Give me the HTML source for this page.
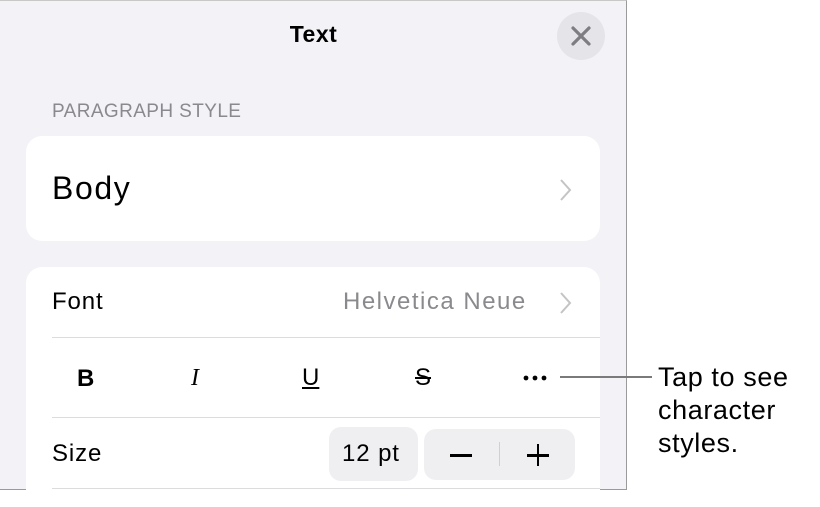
<!DOCTYPE html>
<html><head><style>
*{margin:0;padding:0;box-sizing:border-box}
body{width:820px;height:491px;background:#fff;position:relative;overflow:hidden;font-family:"Liberation Sans",sans-serif;color:#000}
.panel{position:absolute;left:0;top:0;width:627px;height:490px;background:#f2f2f7;border-right:1.5px solid #9a9a9a;border-bottom:1.5px solid #9a9a9a;border-top:1px solid #c8c8c8}
.abs{position:absolute}
.card{position:absolute;left:26px;width:574px;background:#fff;border-radius:16px}
.hr{position:absolute;left:52px;width:548px;height:1px;background:#dcdcdf}
.t{position:absolute;white-space:nowrap}
.lb{font-size:24px;letter-spacing:0.9px}
</style></head><body>
<div class="panel">
 <div class="t" style="left:0;width:627px;text-align:center;top:20px;font-size:23px;font-weight:bold;letter-spacing:0.5px">Text</div>
 <div class="abs" style="left:557px;top:11px;width:48px;height:48px;border-radius:50%;background:#e4e4e9"></div>
 <svg class="abs" style="left:569px;top:23px" width="24" height="24"><path d="M4 4L20 20M20 4L4 20" stroke="#7d7d82" stroke-width="3.2" stroke-linecap="round"/></svg>
 <div class="t" style="left:52px;top:100px;font-size:19px;color:#8a8a8e;letter-spacing:0.4px">PARAGRAPH STYLE</div>
 <div class="card" style="top:135px;height:105px"></div>
 <div class="t" style="left:52px;top:169px;font-size:32px;letter-spacing:1.6px">Body</div>
 <svg class="abs" style="left:559px;top:177px" width="14" height="24"><path d="M2 2L11 12L2 22" stroke="#c4c4c7" stroke-width="2" fill="none"/></svg>
 <div class="card" style="top:266px;height:240px;border-radius:16px 16px 0 0"></div>
 <div class="t lb" style="left:52px;top:287px">Font</div>
 <div class="t lb" style="left:343px;top:287px;color:#8a8a8e;letter-spacing:1.5px">Helvetica Neue</div>
 <svg class="abs" style="left:559px;top:290px" width="14" height="24"><path d="M2 2L11 12L2 22" stroke="#c4c4c7" stroke-width="2" fill="none"/></svg>
 <div class="hr" style="top:336px"></div>
 <div class="t" style="left:77px;top:364px;font-size:24px;font-weight:bold">B</div>
 <div class="t" style="left:191px;top:364px;font-size:24px;font-style:italic;font-family:'Liberation Serif',serif">I</div>
 <div class="t" style="left:302px;top:363px;font-size:24px;text-decoration:underline">U</div>
 <div class="t" style="left:415px;top:363px;font-size:24px;text-decoration:line-through">S</div>
 <svg class="abs" style="left:522px;top:372px" width="30" height="10"><circle cx="4" cy="5" r="2.4"/><circle cx="13" cy="5" r="2.4"/><circle cx="22" cy="5" r="2.4"/></svg>
 <div class="hr" style="top:416px"></div>
 <div class="t lb" style="left:52px;top:439px">Size</div>
 <div class="abs" style="left:329px;top:426px;width:89px;height:54px;background:#efeff2;border-radius:12px"></div>
 <div class="t lb" style="left:342px;top:439px">12 pt</div>
 <div class="abs" style="left:424px;top:428px;width:151px;height:51px;background:#efeff2;border-radius:12px"></div>
 <div class="abs" style="left:499px;top:441px;width:1px;height:24px;background:#d0d0d4"></div>
 <div class="abs" style="left:450px;top:453px;width:22px;height:2.5px;background:#000"></div>
 <div class="abs" style="left:527px;top:453px;width:22px;height:2.5px;background:#000"></div>
 <div class="abs" style="left:536.7px;top:443px;width:2.5px;height:22px;background:#000"></div>
 <div class="hr" style="top:487px"></div>
</div>
<div class="abs" style="left:560px;top:376px;width:92px;height:2px;background:#7a7a7a"></div>
<div class="t" style="left:658px;top:361px;font-size:27px;line-height:33px;letter-spacing:0.6px">Tap to see<br>character<br>styles.</div>
</body></html>
